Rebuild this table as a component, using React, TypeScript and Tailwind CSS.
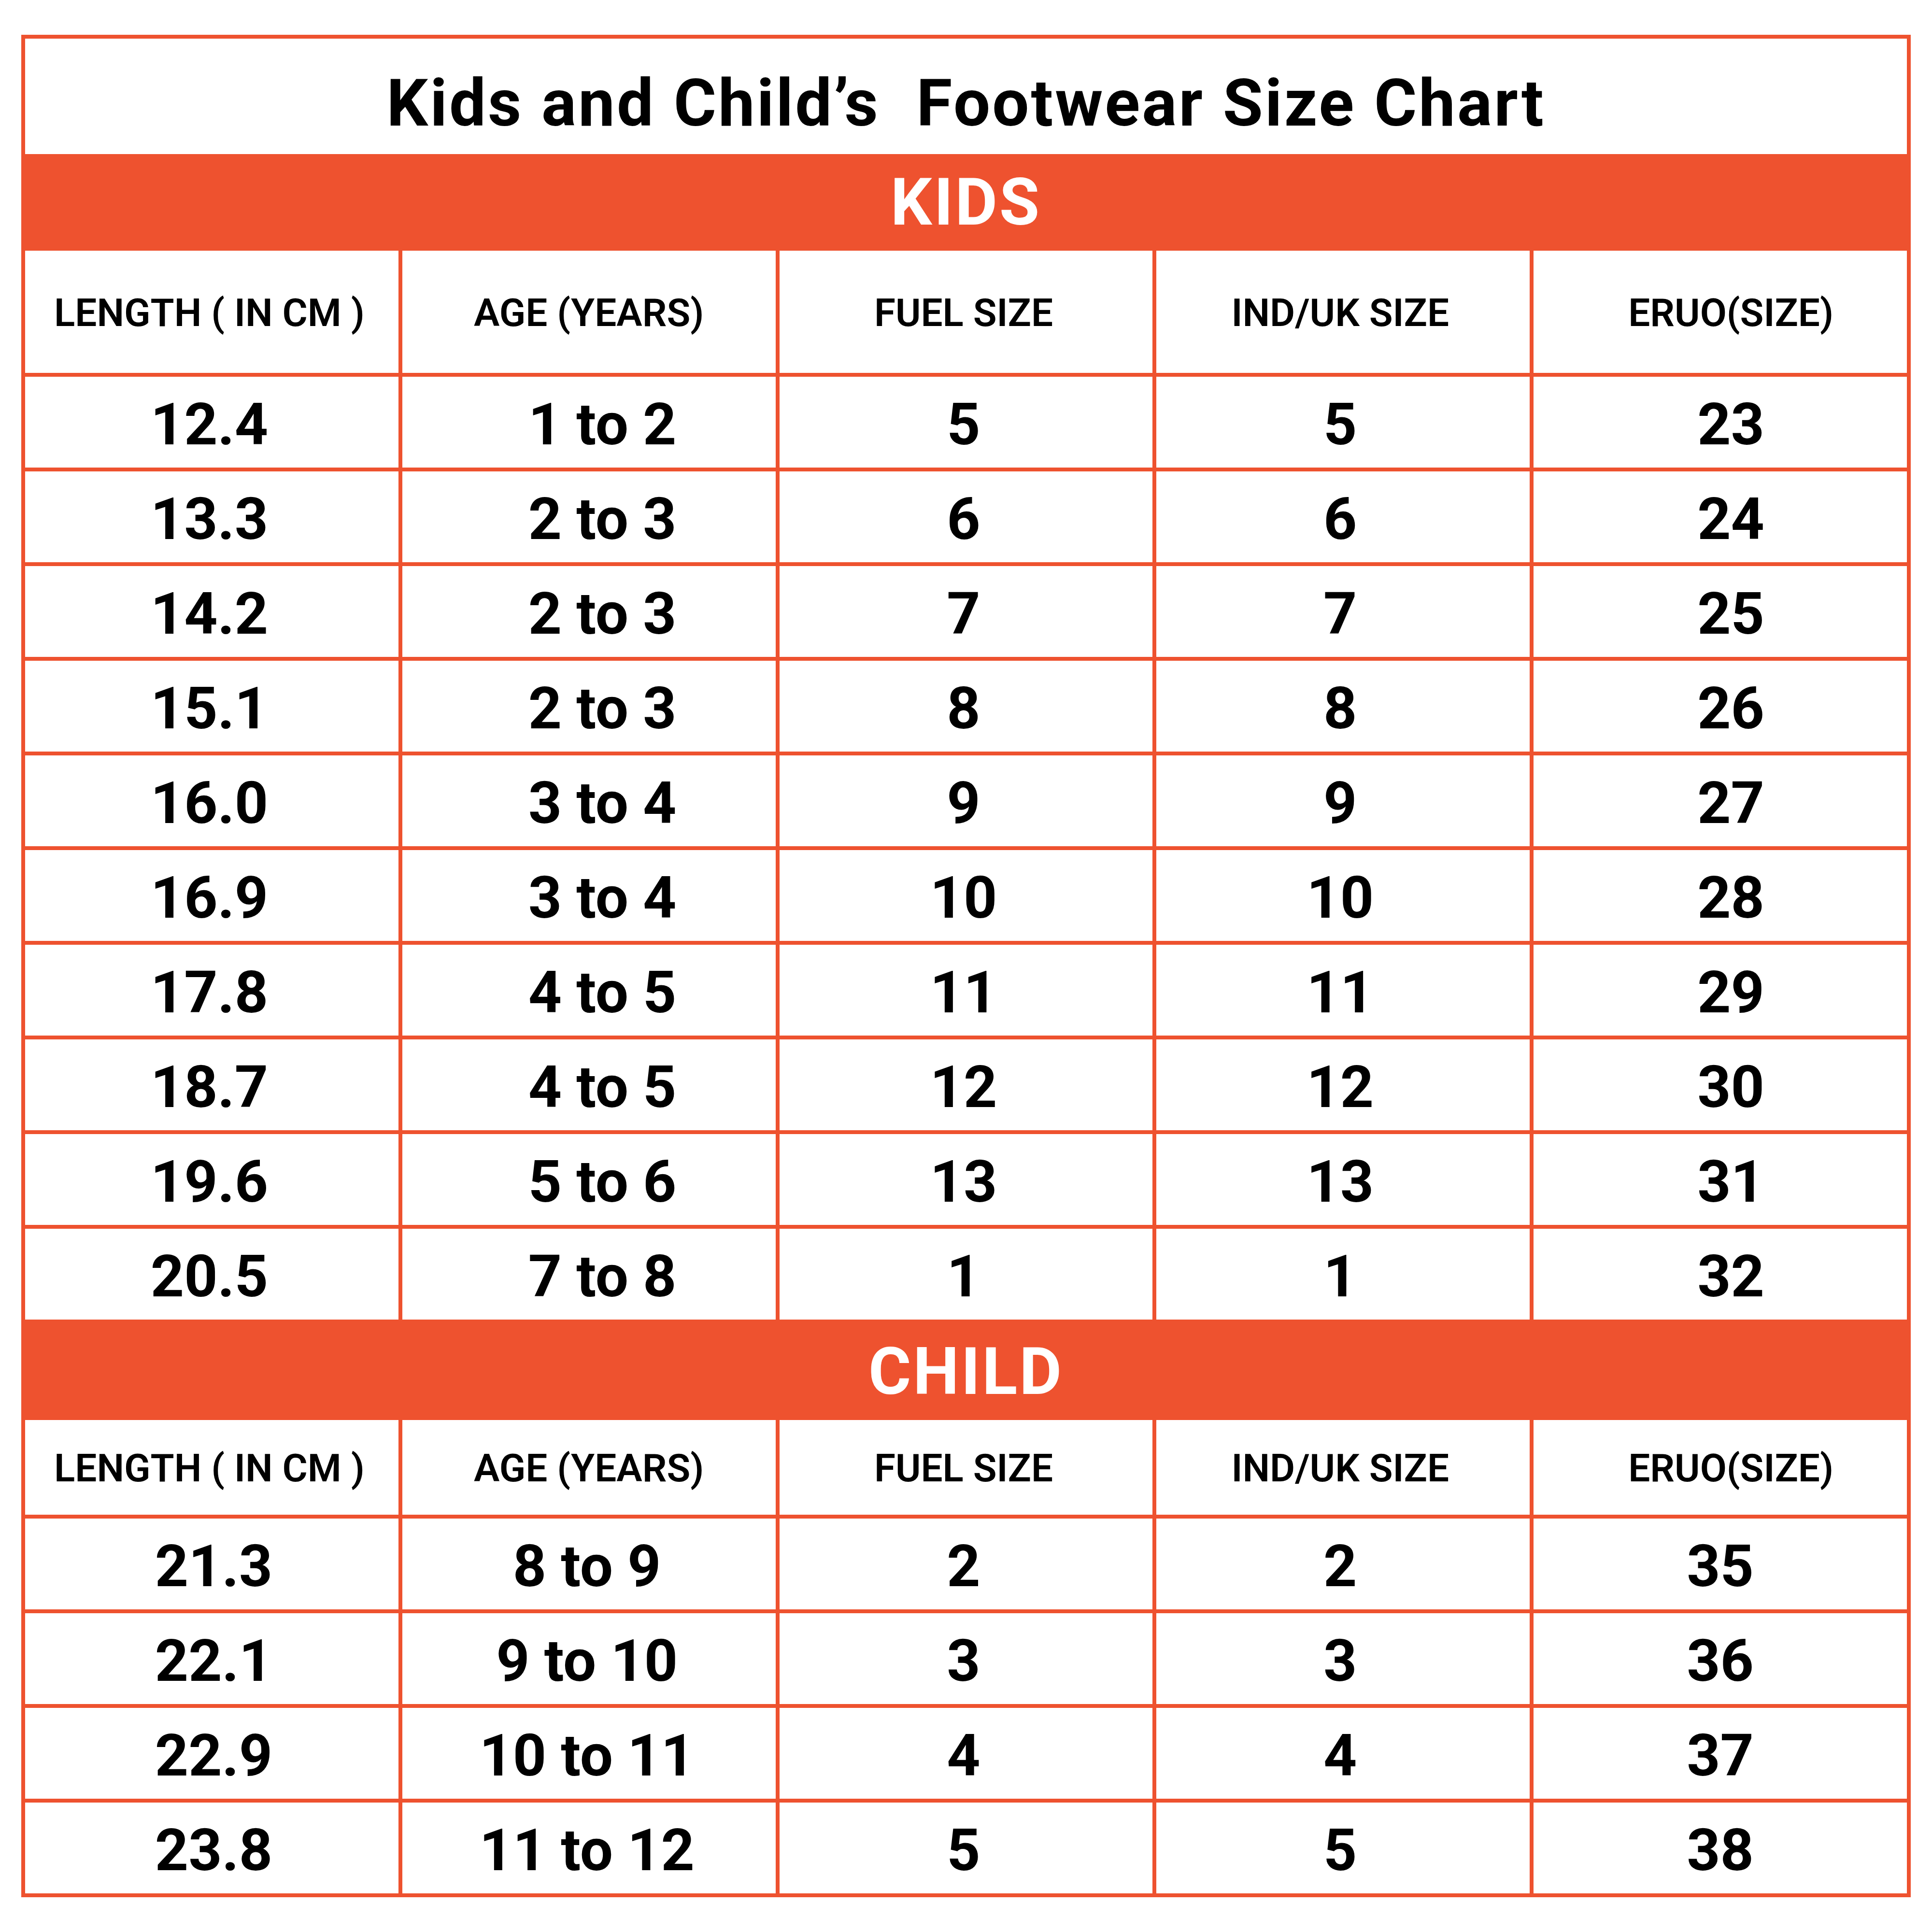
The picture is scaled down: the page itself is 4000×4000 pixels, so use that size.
type Row = [string, string, string, string, string];

const headers: Row = ['LENGTH ( IN CM )', 'AGE (YEARS)', 'FUEL SIZE', 'IND/UK SIZE', 'ERUO(SIZE)'];

const kidsRows: Row[] = [
  ['12.4', '1 to 2', '5', '5', '23'],
  ['13.3', '2 to 3', '6', '6', '24'],
  ['14.2', '2 to 3', '7', '7', '25'],
  ['15.1', '2 to 3', '8', '8', '26'],
  ['16.0', '3 to 4', '9', '9', '27'],
  ['16.9', '3 to 4', '10', '10', '28'],
  ['17.8', '4 to 5', '11', '11', '29'],
  ['18.7', '4 to 5', '12', '12', '30'],
  ['19.6', '5 to 6', '13', '13', '31'],
  ['20.5', '7 to 8', '1', '1', '32'],
];

const childRows: Row[] = [
  ['21.3', '8 to 9', '2', '2', '35'],
  ['22.1', '9 to 10', '3', '3', '36'],
  ['22.9', '10 to 11', '4', '4', '37'],
  ['23.8', '11 to 12', '5', '5', '38'],
];

// the source artwork isn't perfectly centred in every column
const headerShift = ['pr-[10px]', '', 'pr-[10px]', 'pr-[12px]', 'pl-[44px]'];
const kidsShift = ['pr-[10px]', 'pl-[56px]', 'pr-[10px]', 'pr-[12px]', 'pl-[44px]'];
const childShift = ['pl-[8px]', 'pr-[8px]', 'pr-[10px]', 'pr-[12px]', ''];

type SectionProps = {
  label: string;
  rows: Row[];
  headerHeight: string;
  shift: string[];
  last?: boolean;
};

function Section({ label, rows, headerHeight, shift, last = false }: SectionProps) {
  return (
    <>
      <div className="flex h-[200px] items-center justify-center bg-[#EE522F] text-[135px] font-bold leading-none tracking-[0.03em] text-white">
        {label}
      </div>
      <div className={`grid grid-cols-5 gap-[8px] bg-[#EE522F] ${last ? '' : 'pb-[8px]'}`}>
        {headers.map((h, i) => (
          <div
            key={h}
            className={`flex ${headerHeight} items-center justify-center bg-white pt-[4px] text-[80px] font-semibold leading-none text-black ${headerShift[i]}`}
          >
            {h}
          </div>
        ))}
        {rows.map((row, r) =>
          row.map((cell, i) => (
            <div
              key={`${r}-${i}`}
              className={`flex h-[188px] items-center justify-center bg-white pt-[10px] text-[121px] font-bold leading-none text-black ${shift[i]}`}
            >
              {cell}
            </div>
          )),
        )}
      </div>
    </>
  );
}

export default function App() {
  return (
    <div className="h-[4000px] w-[4000px] bg-white pl-[44px] pt-[72px] font-['Roboto',sans-serif]">
      <div className="w-[3912px] border-[8px] border-[#EE522F] bg-white">
        <div className="flex h-[239px] items-center justify-center whitespace-pre pt-[30px] text-[135px] font-bold leading-none tracking-[0.03em] text-black">
          Kids and Child’s  Footwear Size Chart
        </div>
        <Section label="KIDS" rows={kidsRows} headerHeight="h-[253px]" shift={kidsShift} />
        <Section label="CHILD" rows={childRows} headerHeight="h-[196px]" shift={childShift} last />
      </div>
    </div>
  );
}
